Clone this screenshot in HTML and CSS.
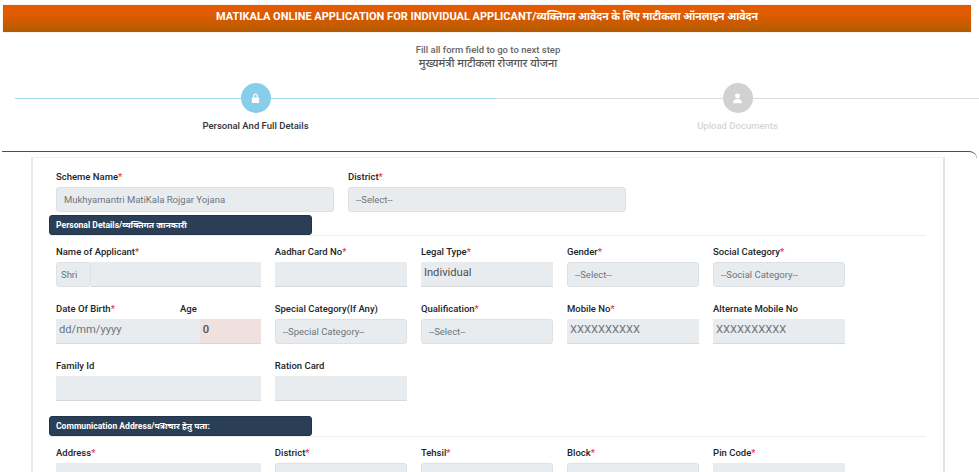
FILE: index.html
```html
<!DOCTYPE html>
<html lang="en">
<head>
<meta charset="utf-8">
<title>Matikala Online Application</title>
<link rel="stylesheet" href="styles.css">
</head>
<body>
<header class="banner">MATIKALA ONLINE APPLICATION FOR INDIVIDUAL APPLICANT/<span class="banner-hi">व्यक्तिगत आवेदन के लिए माटीकला ऑनलाइन आवेदन</span></header>
<div class="intro">
  <p class="intro-hint">Fill all form field to go to next step</p>
  <p class="intro-scheme">मुख्यमंत्री माटीकला रोजगार योजना</p>
</div>
<ol class="steps">
  <li class="step step-active">
    <span class="step-dot">
      <svg viewBox="0 0 12 12" class="step-icon"><path d="M3.800 5V3.600a2.200 2.200 0 0 1 4.400 0V5h.6a.6.6 0 0 1 .6.6v4a.6.6 0 0 1-.6.6H3.200a.6.6 0 0 1-.6-.6v-4a.6.6 0 0 1 .6-.6zM4.900 5h2.200V3.600a1.100 1.100 0 0 0-2.200 0z" fill-rule="evenodd"/></svg>
    </span>
    <span class="step-label">Personal And Full Details</span>
  </li>
  <li class="step">
    <span class="step-dot">
      <svg viewBox="0 0 12 12" class="step-icon"><circle cx="6" cy="3.700" r="2.300"/><path d="M1.800 10.400c0-2.500 1.700-3.900 4.200-3.900s4.200 1.400 4.200 3.900z"/></svg>
    </span>
    <span class="step-label">Upload Documents</span>
  </li>
</ol>
<section class="panel">
  <div class="card">
    <div class="grid-two">
      <div class="field"><label class="label">Scheme Name<i>*</i></label><div class="control select">Mukhyamantri MatiKala Rojgar Yojana</div></div>
      <div class="field"><label class="label">District<i>*</i></label><div class="control select">--Select--</div></div>
    </div>
    <h2 class="section-head"><span>Personal Details/व्यक्तिगत जानकारी</span></h2>
    <div class="grid-five">
      <div class="field"><label class="label">Name of Applicant<i>*</i></label>
        <div class="split"><div class="control select prefix">Shri</div><div class="control input grow"></div></div></div>
      <div class="field"><label class="label">Aadhar Card No<i>*</i></label><div class="control input"></div></div>
      <div class="field"><label class="label">Legal Type<i>*</i></label><div class="control input large dark">Individual</div></div>
      <div class="field"><label class="label">Gender<i>*</i></label><div class="control select">--Select--</div></div>
      <div class="field"><label class="label">Social Category<i>*</i></label><div class="control select">--Social Category--</div></div>

      <div class="field"><div class="label-pair"><label class="label">Date Of Birth<i>*</i></label><label class="label age-label">Age</label></div>
        <div class="split"><div class="control input large grow">dd/mm/yyyy</div><div class="control input large age">0</div></div></div>
      <div class="field"><label class="label">Special Category(If Any)</label><div class="control select">--Special Category--</div></div>
      <div class="field"><label class="label">Qualification<i>*</i></label><div class="control select">--Select--</div></div>
      <div class="field"><label class="label">Mobile No<i>*</i></label><div class="control input large">XXXXXXXXXX</div></div>
      <div class="field"><label class="label">Alternate Mobile No</label><div class="control input large">XXXXXXXXXX</div></div>

      <div class="field"><label class="label">Family Id</label><div class="control input"></div></div>
      <div class="field"><label class="label">Ration Card</label><div class="control input"></div></div>
    </div>
    <h2 class="section-head section-head-2"><span>Communication Address/पत्राचार हेतु पता:</span></h2>
    <div class="grid-five">
      <div class="field"><label class="label">Address<i>*</i></label><div class="control input"></div></div>
      <div class="field"><label class="label">District<i>*</i></label><div class="control select"></div></div>
      <div class="field"><label class="label">Tehsil<i>*</i></label><div class="control select"></div></div>
      <div class="field"><label class="label">Block<i>*</i></label><div class="control select"></div></div>
      <div class="field"><label class="label">Pin Code<i>*</i></label><div class="control input"></div></div>
    </div>
  </div>
</section>
</body>
</html>
```
FILE: styles.css
```css
* { box-sizing: border-box; }
html, body { margin: 0; height: 472px; overflow: hidden; background: #fff; }
body { padding-top: 5px; font-family: Roboto, "Noto Sans", "Noto Sans Devanagari", sans-serif; color: #212529; }

.banner {
  height: 27px;
  margin: 0 8px 0 3px;
  background: linear-gradient(#e35b00 0%, #e05a00 35%, #b35c00 100%);
  color: #fff;
  font-size: 11px;
  font-weight: 700;
  line-height: 23px;
  text-align: center;
  box-shadow: 0 0 1px #e9b48f;
}
.banner-hi { font-size: 10.5px; }

.intro { height: 51px; padding-top: 12px; text-align: center; padding-right: 3px; }
.intro p { margin: 0; }
.intro-hint { font-size: 9.5px; font-weight: 500; line-height: 12px; color: #666; }
.intro-scheme { font-size: 11px; font-weight: 500; line-height: 15px; color: #555; }

.steps { display: flex; margin: 0; padding: 0 0 0 15px; list-style: none; height: 68px; width: 979px; }
.step { position: relative; display: flex; flex-direction: column; align-items: center; width: 481px; }
.step + .step { flex: 1; }
.step::before { content: ""; position: absolute; top: 15px; left: 0; right: 0; height: 1px; background: #dcdcdc; }
.step-active::before { background: #a6dcf2; }
.step-dot { position: relative; display: flex; align-items: center; justify-content: center; width: 30px; height: 30px; border-radius: 50%; background: #d1d1d1; }
.step-active .step-dot { background: #87ceeb; }
.step-icon { width: 13px; height: 13px; fill: #fff; }
.step-label { margin-top: 7px; font-size: 9.5px; font-weight: 500; line-height: 12px; color: #d6d6d6; }
.step-active .step-label { color: #333; }

.panel { margin: 0 2px; height: 321px; padding: 5px 32px 0 29px; border-top: 1px solid #7b3b3f; border-top-right-radius: 8px; }
.card { height: 320px; padding: 13px 18px 0 23px; border: 1px solid #eee; border-left: 2px solid #e8e8e8; border-right: 2px solid #e4e4e4; border-bottom: 0; }

.grid-two { display: grid; grid-template-columns: 278px 278px; column-gap: 14px; }
.grid-two .label { margin-bottom: 3px; }
.grid-five { display: grid; grid-template-columns: 204.700px repeat(4, 132px); column-gap: 14.100px; row-gap: 16px; padding-top: 10px; }

.label { display: block; height: 13px; margin-bottom: 3px; font-size: 9.5px; font-weight: 500; line-height: 12px; color: #212529; white-space: nowrap; }
.label i { font-style: normal; color: #e8333f; }
.label-pair { display: flex; }
.label-pair .label:first-child { flex: none; width: 55px; }
.age-label { flex: none; margin-left: 69px; }

.control { height: 25px; background: #e9ecef; font-size: 9.5px; line-height: 25px; color: #6c757d; overflow: hidden; white-space: nowrap; }
.select { border: 1px solid #dde0e4; border-radius: 3px; padding-left: 7px; line-height: 23px; }
.input { border-bottom: 1px solid #d5d8dc; padding-left: 3px; }
.large { font-size: 11.2px; line-height: 22px; }
.dark { color: #495057; }
.split { display: flex; }
.prefix { flex: none; width: 35px; padding-left: 4px; }
.grow { flex: 1; }
.age { flex: none; width: 61px; background: #f0e1de; color: #495057; font-weight: 500; }

.section-head { margin: 3px 0 0 -7px; height: 21px; width: 877px; border-bottom: 1px solid #eee; }
.section-head span { display: block; width: 263px; height: 20px; padding-left: 6px; background: #2a3f56; border: 1px solid #22344a; border-radius: 3px; color: #fff; font-size: 8.6px; font-weight: 700; line-height: 18px; }
.section-head-2 { margin-top: 15px; }
```
